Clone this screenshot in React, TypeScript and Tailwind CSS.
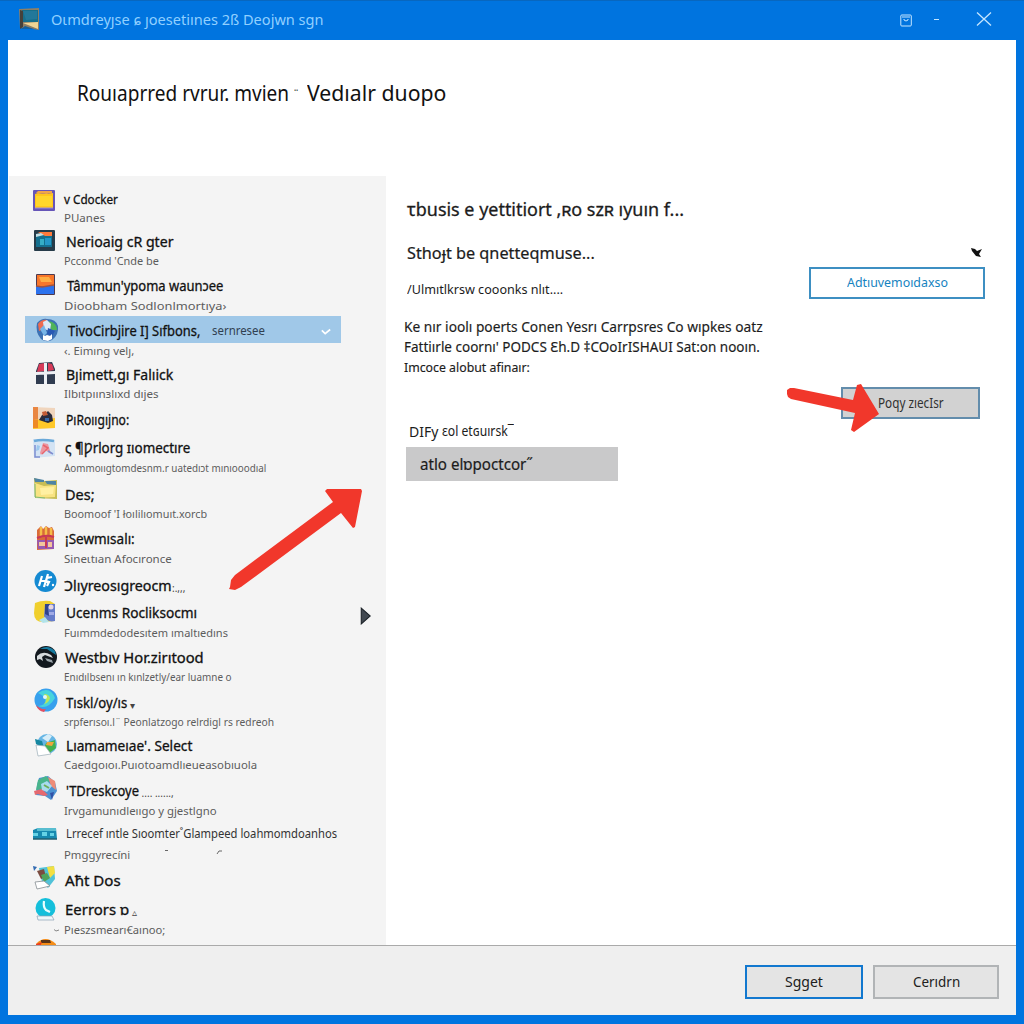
import React, { useLayoutEffect, useRef, useState } from "react";

/* Single line of text stretched horizontally to a given width. */
function Fit({ w, children, className = "" }: { w: number; children: string; className?: string }) {
  const ref = useRef<HTMLSpanElement>(null);
  const [scale, setScale] = useState(1);
  useLayoutEffect(() => {
    if (ref.current) setScale(w / ref.current.offsetWidth);
  }, [w, children]);
  return (
    <span className={"block shrink-0 whitespace-pre " + className} style={{ width: w }}>
      <span ref={ref} className="inline-block origin-left" style={{ transform: `scaleX(${scale})` }}>
        {children}
      </span>
    </span>
  );
}

const icons: Record<string, React.ReactNode> = {
  folder: (
    <>
      <rect x="0" y="1" width="22" height="21" rx="1" fill="#6655b8" />
      <path d="M2 5l3-1 6 1 9-1v15H2z" fill="#ffc61a" />
      <path d="M3 7h16v10H3z" fill="#ffd62b" />
      <path d="M3 4l2-2h14v3l-3-1-2 1z" fill="#f0a548" />
      <path d="M2 19h18" stroke="#9d8fd8" strokeWidth="1" />
    </>
  ),
  monitor: (
    <>
      <rect x="1" y="1" width="21" height="21" rx="1" fill="#263b49" />
      <rect x="3" y="5" width="16" height="13" fill="#14708f" />
      <path d="M5 3h14v4h-7z" fill="#ff7a3b" />
      <path d="M3 5l5-1 3 2-8 2z" fill="#c3dfe5" />
      <path d="M7 10h4v6H7z" fill="#36aec6" />
      <path d="M12 9h6v7h-6z" fill="#2497c8" />
    </>
  ),
  sunset: (
    <>
      <rect x="3" y="1" width="19" height="21" rx="1" fill="#4d3a50" />
      <rect x="4" y="2" width="17" height="11" fill="#f8762a" />
      <path d="M6 4h10l3 5H8z" fill="#ffae43" />
      <path d="M3 13h18v8H3z" fill="#2c72ee" />
      <path d="M3 13l6 1 12-2" stroke="#a0523f" strokeWidth="1.5" fill="none" />
    </>
  ),
  shield: (
    <>
      <path d="M4 5Q9 0 14 1q9 0 11 7 1 9-6 14-6 3-11-1Q2 14 4 5z" fill="#3d72b4" />
      <path d="M5 6q4-5 9-4v8l-8 3z" fill="#ee6b50" />
      <path d="M16 3q8 2 8 9h-6z" fill="#4fb45a" />
      <path d="M10 4l4-2 4 4-1 7-6-2z" fill="#dbe9f6" />
      <path d="M7 11l4-4 3 8-3 3z" fill="#77b5e8" />
      <path d="M15 10l7 3-3 5-5-2z" fill="#2859b4" />
      <path d="M10 17l2 1 2-1 3 1 2-2v5l-4 2-5-1z" fill="#fff" />
    </>
  ),
  cross: (
    <>
      <path d="M6 1l13-1 3 7v15H3V9z" fill="#303c50" />
      <path d="M6 2l6-1-1 8-7 1zM15 1l4 1 2 6-6 1z" fill="#d83b59" />
      <path d="M11 1h3v21h-3zM3 10l19-1v3l-19 1z" fill="#edf0f4" />
    </>
  ),
  picture: (
    <>
      <path d="M0 1l22 1v20L0 23z" fill="#f0d5bd" />
      <path d="M0 1h5v13H0z" fill="#e98642" />
      <path d="M0 14l22-2v10L0 23z" fill="#ffc829" />
      <path d="M0 14h5v8H0z" fill="#ee8a25" />
      <path d="M6 14l3-5 4-2 2-2 4 4 1 6-5 2z" fill="#2a2c3c" />
      <path d="M9 6l4-1 2 4-5 1z" fill="#c45c35" />
      <path d="M12 12h4v3h-4z" fill="#3668a8" />
    </>
  ),
  postcard: (
    <>
      <path d="M0 2l22 1v16L1 21z" fill="#d3e3f4" />
      <path d="M1 4q8-2 20 0" stroke="#6aa9d9" strokeWidth="2.500" fill="none" />
      <path d="M7 16l3-10 5 1 3 10-6-4-4 5z" fill="#ed96a0" />
      <path d="M10 8l5 3-6 6" stroke="#e8646c" strokeWidth="1.5" fill="none" />
      <path d="M15 14l5 3M2 8v12h5" stroke="#7e8ed0" strokeWidth="1.5" fill="none" />
      <path d="M4 8l3 1-1 4-3 1z" fill="#9cc8ee" />
    </>
  ),
  yellowFolder: (
    <>
      <path d="M1 0l10 3 13-1v19l-22-1z" fill="#c7bd56" />
      <path d="M1 0l10 2v2L2 4zM12 3h11v4l-9-1z" fill="#4e83a4" />
      <path d="M2 5l9 3 12-1-1 12-19 1z" fill="#f8e382" />
      <path d="M7 10l14-1-1 7-12 1z" fill="#fff0a2" />
      <path d="M2 6v13l10 1" stroke="#7dbb75" strokeWidth="1" fill="none" />
    </>
  ),
  castle: (
    <>
      <path d="M4 4l4-4 2 3 3-3 3 2 3-1 2 4v18l-17 1z" fill="#d96b39" />
      <path d="M8 1v9M13 1v9M18 2v8" stroke="#f6bd48" strokeWidth="2.500" />
      <path d="M4 14h17v9H5z" fill="#9659b2" />
      <path d="M6 16h6v4H6zM15 16h4v5h-4z" fill="#f3c59c" />
      <path d="M4 12q9-4 17-1M13 11v11" stroke="#c93757" strokeWidth="2" fill="none" />
    </>
  ),
  blueDisc: (
    <>
      <circle cx="12.500" cy="12" r="11" fill="#158ad2" />
      <path d="M9 7l-3 10M15 5l-4 13M8 12h5M19 8l-5 1-1 3 3 1-2 4" stroke="#fff" strokeWidth="2.200" fill="none" />
      <circle cx="20" cy="16" r="1.200" fill="#fff" />
    </>
  ),
  moon: (
    <>
      <path d="M2 3Q9 0 17 1l5 3v17l-12 1Q1 22 1 13z" fill="#f0cf2d" />
      <path d="M12 4l10 0v17q-8 2-11-5z" fill="#657cca" />
      <path d="M12 4l5 0-2 4 1 8-4-2z" fill="#2f438e" />
      <circle cx="18" cy="7" r="2.500" fill="#e6d6df" />
      <path d="M16 12h5v3h-5z" fill="#a0aae6" />
      <path d="M6 20l6-3 4 5-6 1z" fill="#b2e3ea" />
    </>
  ),
  darkDisc: (
    <>
      <circle cx="13" cy="12" r="11" fill="#12181e" />
      <path d="M7 4Q15-1 22 6l1 4-9-6z" fill="#167ba0" />
      <path d="M4 11q6-6 14-1l2 3-8-3-3 2 1 4-3-2-3 1z" fill="#d5dadc" />
      <path d="M12 13l7 2 1 3-6-2z" fill="#9aa4aa" />
    </>
  ),
  swirl: (
    <>
      <circle cx="13" cy="12" r="11.500" fill="#37a0ed" />
      <path d="M5 5q12-8 17 5-7 12-17 8 9-1 7-7-2-4-7-6z" fill="#47d4dc" />
      <path d="M11 6q5 0 6 4-1 5-6 6 4-4 0-10z" fill="#b8e55a" />
      <circle cx="12" cy="9" r="2" fill="#e4f6f8" />
      <path d="M3 17q5 5 10 4l-2 3q-6-1-8-7z" fill="#e35062" />
    </>
  ),
  globePaper: (
    <>
      <circle cx="14" cy="11" r="10" fill="#65b5e4" />
      <path d="M9 5l6-4 4 2-4 6z" fill="#d7edf8" />
      <path d="M13 10l9-3 1 8-8 6-4-6z" fill="#45b14f" />
      <path d="M14 9h7l-2 4-6-1z" fill="#efa63c" />
      <path d="M2 6l7 2 2 7-8-4z" fill="#1787a1" />
      <path d="M3 12l9 1 6 8-13 2z" fill="#fff" stroke="#9badb7" strokeWidth=".7" />
    </>
  ),
  ribbon: (
    <>
      <path d="M6 2l9-2 7 6 2 9-6 9-6-4-9-1 1-10z" fill="#4b92d2" />
      <path d="M5 4l8-4 4 4-6 9-8 1z" fill="#49b58c" />
      <path d="M15 1l7 4 1 9-5-4z" fill="#ef8c77" />
      <path d="M1 15l8-2 6 6-4 1-6-2-3 1z" fill="#e5696f" />
      <path d="M8 8l6-3 5 5-5 6-5-2z" fill="#a9dcee" />
      <path d="M11 9l5 3" stroke="#6fae58" strokeWidth="2" />
      <path d="M17 17l4-1-2 8z" fill="#3151a6" />
    </>
  ),
  toolbox: (
    <>
      <path d="M0 8l5-2h18l1 11H0z" fill="#1689af" />
      <path d="M4 6h19v3H4z" fill="#58bdd0" />
      <path d="M0 11h5v3H0zM9 10h5v4H9zM17 11h4v3h-4z" fill="#65d2e5" />
      <path d="M0 17h24" stroke="#205f70" strokeWidth="1.500" />
    </>
  ),
  parrot: (
    <>
      <path d="M6 2l15-2 1 13-7 9-6-6z" fill="#51c2d8" />
      <path d="M14 1l7-1 1 7-5 5z" fill="#f3df41" />
      <path d="M4 5l7-2 2 8-5 2z" fill="#7b4d41" />
      <path d="M8 9l6-2 3 5-6 4z" fill="#4fa45b" />
      <path d="M0 0l4 1-3 4z" fill="#336bb1" />
      <path d="M2 16l9-1 6 5-13 3z" fill="#fff" stroke="#878e92" strokeWidth=".8" />
    </>
  ),
  clock: (
    <>
      <circle cx="12.500" cy="11" r="10" fill="#14bfdb" />
      <path d="M4 19h15l2 4H5z" fill="#eef7fa" stroke="#8aa0b4" strokeWidth=".7" />
      <path d="M11 4q-1 6 2 9l4 2" stroke="#e8ffff" strokeWidth="2.200" fill="none" />
    </>
  ),
  badge: (
    <>
      <path d="M4 8q9-10 20 0v7H4z" fill="#f58c16" />
      <path d="M9 4h9l1 3H9z" fill="#5b3418" />
      <path d="M4 8l6-2-2 5H4z" fill="#eb3d20" />
    </>
  ),
};

type Item = {
  icon: string;
  shift: string;
  height: string;
  title: string;
  w: number;
  size?: string;
  pad?: string;
  sub?: string;
  sw?: number;
  subClass?: string;
  selected?: boolean;
  plain?: boolean;
  tail?: string;
  lead?: boolean;
};

const items: Item[] = [
  { icon: "folder", shift: "mt-px", height: "h-[43px]", title: "v Cdocker", w: 54, size: "text-[13px]", pad: "pl-[6px]", sub: "PUanes", sw: 41 },
  { icon: "monitor", shift: "-mt-[2px]", height: "h-[44px]", title: "Nerioaig cR gter", w: 108, pad: "pl-[8px]", sub: "Pcconmd 'Cnde be", sw: 95 },
  { icon: "sunset", shift: "-mt-[2px]", height: "h-[45px]", title: "Tâmmun'ypoma waunɔee", w: 156, size: "text-[13.5px]", pad: "pl-[9px]", sub: "Dioobham Sodlonlmortıya›", sw: 162, subClass: "mt-px" },
  { icon: "shield", shift: "-mt-[2px]", height: "h-[44px]", title: "TivoCirbjire I] Sıfbons,", w: 132, pad: "pl-[10px]", sub: "‹. Eimıng velȷ,", sw: 70, subClass: "mt-px", selected: true },
  { icon: "cross", shift: "-mt-[2px]", height: "h-[45px]", title: "Bȷimett,gı Falıick", w: 107, pad: "pl-[8px]", sub: "Ilbıtpıınɜlıxd dıjes", sw: 95 },
  { icon: "picture", shift: "-mt-[3px]", height: "h-[28px]", title: "PıRoııgıjno:", w: 63, pad: "pl-[8px]" },
  { icon: "postcard", shift: "", height: "h-[46px]", title: "ς ¶Ƿrlorg ɪıomectıre", w: 125, size: "text-[13.5px]", sub: "Aommoııgtomdesnm.r uatedıɔt mınıooodıal", sw: 202, subClass: "mt-px" },
  { icon: "yellowFolder", shift: "-mt-[5px]", height: "h-[45px]", title: "Des;", w: 30, size: "text-[14.5px]", sub: "Boomoof 'I łoılilıomuıt.xorcb", sw: 143, subClass: "mt-px" },
  { icon: "castle", shift: "-mt-[2px]", height: "h-[47px]", title: "¡Sewmısalı:", w: 70, size: "text-[13.5px]", sub: "Sineɩtıan Afocıronce", sw: 108, subClass: "mt-px" },
  { icon: "blueDisc", shift: "-mt-[6px]", height: "h-[27px]", title: "Ɔlıyreosıgreocm", w: 108, pad: "pl-[6px]", tail: ":.,,," },
  { icon: "moon", shift: "-mt-[2px]", height: "h-[45px]", title: "Ucenms Rocliksocmı", w: 131, pad: "pl-[8px]", sub: "Fuımmdedodesıtem ımaltıedıns", sw: 164, subClass: "mt-px" },
  { icon: "darkDisc", shift: "-mt-[2px]", height: "h-[45px]", title: "Westbıv Hor.zirıtood", w: 139, sub: "Enıdılbsenı ın kınlzetly/ear luamne o", sw: 168 },
  { icon: "swirl", shift: "-mt-[4px]", height: "h-[43px]", title: "Tıskl/oy/ıs", w: 61, pad: "pl-[8px]", tail: " ▾", sub: "srpferısoı.l¨ Peonlatzogo relrdigl rs redreoh", sw: 210 },
  { icon: "globePaper", shift: "-mt-[2px]", height: "h-[45px]", title: "Lıamameıae'. Select", w: 126, pad: "pl-[8px]", sub: "Caedgoıoı.Puıotoamdlıeueasobıuola", sw: 193 },
  { icon: "ribbon", shift: "-mt-[4px]", height: "h-[43px]", title: "'TDreskcoye", w: 73, pad: "pl-[8px]", tail: " .... ......,", sub: "Irvgamunıdleııgo y gjestlgno", sw: 153, subClass: "mt-px" },
  { icon: "toolbox", shift: "-mt-px", height: "h-[47px]", title: "Lrrecef ıntle Sıoomter˚Glampeed loahmomdoanhos", w: 271, size: "text-[12.5px]", pad: "pl-[8px]", sub: "Pmggyrecíni", sw: 66, subClass: "mt-[2px]", plain: true },
  { icon: "parrot", shift: "-mt-[4px]", height: "h-[29px]", title: "Aħt Dos", w: 56 },
  { icon: "clock", shift: "-mt-[2px]", height: "h-[43px]", title: "Eerrors ɒ", w: 64, tail: " ▵", sub: "Pıeszsmearı€aınoo;", sw: 101, subClass: "mt-px", lead: true },
];

function Row({ item }: { item: Item }) {
  return (
    <li className={"flex shrink-0 pl-6 " + item.height}>
      <svg viewBox="0 0 24 24" className={"size-6 shrink-0 overflow-visible " + item.shift}>
        {icons[item.icon]}
      </svg>
      <div className="flex flex-col pl-[1px]">
        <div className={"flex h-[22px] shrink-0 items-center leading-[22px] text-[#111] " + (item.pad ?? "pl-[7px]") + " " + (item.size ?? "text-[14px]")}>
          <Fit w={item.w} className={item.plain ? "text-[#333]" : "[-webkit-text-stroke:0.3px_#111]"}>{item.title}</Fit>
          {item.tail && <span className="whitespace-pre pt-1 text-[10px] text-[#444]">{item.tail}</span>}
          {item.selected && (
            <>
              <Fit w={53} className="ml-3 text-[12.5px] text-[#304050]">sernresee</Fit>
              <svg viewBox="0 0 12 8" className="ml-[56px] mt-px h-2 w-[10px]" fill="none" stroke="#fff" strokeWidth="2">
                <path d="M1 2l4 4 6-5" />
              </svg>
            </>
          )}
        </div>
        {item.sub && (
          <div className={"flex items-center " + (item.subClass ?? "")}>
            {item.lead && (
              <svg viewBox="0 0 5 3" className="-ml-1 mr-1 h-[3px] w-[5px]" fill="none" stroke="#888">
                <path d="M0 .5l2 1.500 3-1" />
              </svg>
            )}
            <Fit w={item.sw ?? 100} className={"box-content text-[11.5px] leading-4 text-[#5c5c5c] " + (item.lead ? "pl-px" : "pl-[6px]")}>
              {item.sub}
            </Fit>
            {item.plain && (
              <svg viewBox="0 0 60 6" className="ml-[34px] -mt-[6px] h-[6px] w-[60px]" fill="none" stroke="#666">
                <path d="M1 1.500h3M53 5l2-3h3" />
              </svg>
            )}
          </div>
        )}
      </div>
    </li>
  );
}

export default function App() {
  return (
    <div className="relative flex h-[1024px] w-[1024px] flex-col overflow-hidden border-t border-[#0867bf] bg-[#0074df] font-['Noto_Sans','Open_Sans',sans-serif]">
      <header className="flex h-[39px] shrink-0 items-center pl-[18px]">
        <svg viewBox="0 0 22 23" className="-mt-[2px] h-[23px] w-[22px]">
          <path d="M1 1l20-1v22l-6-1-13-1z" fill="#8d7f66" />
          <path d="M4 2h16v12H4z" fill="#176f8b" />
          <path d="M5 3h14v8L8 12z" fill="#22789a" />
          <path d="M2 2l3 1v16l-3 2z" fill="#46413a" />
          <path d="M5 15l15-1v7z" fill="#f0d594" />
          <path d="M3 21l4-3 9 3z" fill="#15609c" />
        </svg>
        <Fit w={273} className="-mt-[2px] ml-[11px] text-[14.5px] text-[#91d0ff]">Oɩmdreyȷse ɕ ȷoesetiınes 2ß Deojwn sgn</Fit>
        <div className="ml-auto flex items-center pr-8 text-[#c4e6ff]">
          <svg viewBox="0 0 12 13" className="-mt-px h-[13px] w-3" fill="none" stroke="currentColor">
            <rect x=".8" y="1" width="10.500" height="11" rx="1" />
            <path d="M2 3h8M4 5v1l2 1 2-1V5" />
          </svg>
          <span className="-mt-[3px] ml-[22px] h-px w-[5px] bg-current" />
          <svg viewBox="0 0 16 14" className="-mt-[4px] ml-[37px] h-[14px] w-4" fill="none" stroke="currentColor" strokeWidth="1.3">
            <path d="M1 .5l14 13M15 .5l-14 13" />
          </svg>
        </div>
      </header>

      <main className="mx-2 flex h-[975px] flex-col bg-white">
        <h1 className="flex h-[136px] shrink-0 pl-[69px] pt-[36px] text-[22px] leading-[32px] text-[#111]">
          <Fit w={212}>Rouıaprred rvrur. mvien</Fit>
          <Fit w={6} className="ml-[4px] mr-[8px] pt-[3px] text-[16px]">¨</Fit>
          <Fit w={139}>Vedıalr duopo</Fit>
        </h1>

        <div className="flex h-[769px] shrink-0">
          <nav className="relative ml-[1px] w-[377px] shrink-0 overflow-hidden bg-[#f4f4f4]">
            <span className="absolute left-4 top-[140px] h-[27px] w-[316px] bg-[#a0c8e8]" />
            <ul className="relative flex flex-col pt-3">
              {items.map((item) => (
                <Row key={item.icon} item={item} />
              ))}
            </ul>
            <svg viewBox="0 0 24 24" className="absolute left-[23px] top-[760px] size-6">{icons.badge}</svg>
            <svg viewBox="0 0 10 17" className="absolute left-[351px] top-[431px] h-[18px] w-[11px]">
              <path d="M1 1l8.500 7.500L1 16z" fill="#414850" stroke="#1c2228" />
            </svg>
          </nav>

          <section className="flex flex-1 flex-col pl-[21px] text-[#1c1c1c]">
            <h2 className="mt-[19px] h-[30px] text-[18px] leading-[29px] [-webkit-text-stroke:0.3px_#1c1c1c]">
              <Fit w={277}>τbusis e yettitiort ,ʀo szʀ ıyuın f...</Fit>
            </h2>
            <div className="mt-[15px] flex h-6 items-center">
              <Fit w={188} className="mt-px text-[16px] [-webkit-text-stroke:0.2px_#1c1c1c]">Sthoɟt be qnetteqmuse...</Fit>
              <svg viewBox="0 0 12 11" className="ml-[376px] mt-px h-[11px] w-3">
                <path d="M0 1l4 1 2 2 5-2-3 5 2 3-5-1-4-5z" fill="#111" />
              </svg>
            </div>
            <div className="mt-[3px] flex h-8 items-start">
              <Fit w={156} className="mt-[10px] text-[13px] leading-6">/Ulmıtlkrsw cooonks nlıt....</Fit>
              <button className="ml-[246px] flex h-8 w-[176px] items-center justify-center border-2 border-[#3d8fc2] text-[12.5px] text-[#1583bf]">
                <Fit w={101}>Adtıuvemoıdaxso</Fit>
              </button>
            </div>
            <div className="-ml-[3px] mt-[18px] flex flex-col text-[14px] leading-5 [-webkit-text-stroke:0.15px_#1c1c1c]">
              <Fit w={359}>Ke nır ioolı poerts Conen Yesrı Carrpsres Co wıpkes oatz</Fit>
              <Fit w={356}>Fattiırle coornı' PODCS Ɛh.D ‡COoIrISHAUI Sat:on nooın.</Fit>
              <Fit w={126} className="text-[13px]">Imcoce alobut afinaır:</Fit>
            </div>
            <button className="ml-[434px] mt-[10px] flex h-8 w-[139px] items-center justify-center border-2 border-[#638dac] bg-[#d2d2d2] text-[13.5px] text-[#303030]">
              <Fit w={66}>Poqy zıecIsr</Fit>
            </button>
            <div className="ml-[2px] flex text-[15px] leading-6">
              <Fit w={29}>DIFy</Fit>
              <Fit w={72} className="ml-[4px] text-[13.5px]">ɛol etɢuırsk‾</Fit>
            </div>
            <div className="-ml-px mt-1 h-[34px] w-[212px] bg-[#c9c9ca] pl-[14px] text-[15.5px] leading-[35px] [-webkit-text-stroke:0.2px_#1c1c1c]">
              <Fit w={113}>atlo elɒpoctcor˝</Fit>
            </div>
          </section>
        </div>

        <footer className="flex h-[70px] shrink-0 justify-end gap-2.5 border-t border-[#aaa] bg-[#efefef] pr-[17px] pt-[19px] text-[14px] text-[#202020]">
          <button className="flex h-[34px] w-[118px] items-center justify-center border-2 border-[#1278cf] bg-[#e4e4e4]">
            <Fit w={38} className="-mt-[2px]">Sgget</Fit>
          </button>
          <button className="flex h-[34px] w-[126px] items-center justify-center border-2 border-[#b1b4b6] bg-[#e4e4e4]">
            <Fit w={47} className="-mt-[2px]">Cerıdrn</Fit>
          </button>
        </footer>
      </main>

      <svg viewBox="0 0 134 104" className="pointer-events-none absolute left-[229px] top-[485px] h-[104px] w-[134px]">
        <path d="M1 101l1-7 4-5L104 16l-8-11 2-2h34l1 2-7 36-2 1-12-15L12 101l-6 3-6-1z" fill="#f1372b" />
      </svg>
      <svg viewBox="0 0 94 52" className="pointer-events-none absolute left-[786px] top-[381px] h-[52px] w-[94px]">
        <path d="M1 12V8l3-2h4l59 12 4-15 4-1 18 30-25 18-3-2 4-17-64-14-3-2z" fill="#f1372b" />
      </svg>
    </div>
  );
}
